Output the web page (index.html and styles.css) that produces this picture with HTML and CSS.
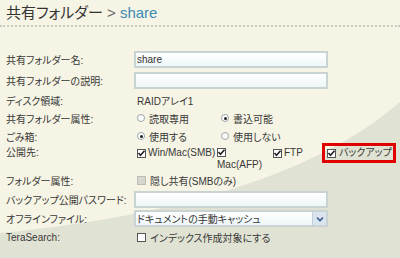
FILE: index.html
```html
<!DOCTYPE html>
<html lang="ja">
<head>
    <meta charset="UTF-8">
    <title>共有フォルダー</title>
    <link rel="stylesheet" href="styles.css">
</head>
<body>
<svg class="bg" width="400" height="258" viewBox="0 0 400 258">
    <path d="M0,233 C120,222 300,190 400,102 L400,258 L0,258 Z" fill="#e0e3d3"/>
</svg>

<div class="page">
    <h1 class="title">共有フォルダー <span class="sep">&gt;</span> <span class="name">share</span></h1>

    <div class="form">
        <div class="row field">
            <label>共有フォルダー名:</label>
            <input class="text" type="text" value="share">
        </div>
        <div class="row field">
            <label>共有フォルダーの説明:</label>
            <input class="text" type="text" value="">
        </div>
        <div class="row">
            <label>ディスク領域:</label>
            <div class="val">RAIDアレイ1</div>
        </div>
        <div class="row">
            <label>共有フォルダー属性:</label>
            <div class="opt"><span class="radio"></span>読取専用</div>
            <div class="opt"><span class="radio on"></span>書込可能</div>
        </div>
        <div class="row">
            <label>ごみ箱:</label>
            <div class="opt"><span class="radio on"></span>使用する</div>
            <div class="opt"><span class="radio"></span>使用しない</div>
        </div>
        <div class="row pub">
            <label>公開先:</label>
            <div class="pc pc1"><span class="cb on"><svg width="9" height="9" viewBox="0 0 9 9"><path d="M1.5,4 L3.5,6.3 L7.5,1.8" fill="none" stroke="#222" stroke-width="1.6"/></svg></span>Win/Mac(SMB)</div>
            <div class="pc pc2"><div class="narrow"><span class="cb on"><svg width="9" height="9" viewBox="0 0 9 9"><path d="M1.5,4 L3.5,6.3 L7.5,1.8" fill="none" stroke="#222" stroke-width="1.6"/></svg></span> Mac(AFP)</div></div>
            <div class="pc pc3"><span class="cb on"><svg width="9" height="9" viewBox="0 0 9 9"><path d="M1.5,4 L3.5,6.3 L7.5,1.8" fill="none" stroke="#222" stroke-width="1.6"/></svg></span>FTP</div>
            <div class="pc mark"><span class="cb on"><svg width="9" height="9" viewBox="0 0 9 9"><path d="M1.5,4 L3.5,6.3 L7.5,1.8" fill="none" stroke="#222" stroke-width="1.6"/></svg></span>バックアップ</div>
        </div>
        <div class="row">
            <label>フォルダー属性:</label>
            <div class="val check"><span class="cb off"></span>隠し共有(SMBのみ)</div>
        </div>
        <div class="row field pw">
            <label>バックアップ公開パスワード:</label>
            <input class="text" type="password" value="">
        </div>
        <div class="row field sel">
            <label>オフラインファイル:</label>
            <div class="select">
                <span class="sel-text">ドキュメントの手動キャッシュ</span>
                <span class="arrow"><svg width="8" height="6" viewBox="0 0 8 6"><path d="M1,1.5 L4,4.5 L7,1.5" fill="none" stroke="#3d5c8c" stroke-width="1.6"/></svg></span>
            </div>
        </div>
        <div class="row">
            <label>TeraSearch:</label>
            <div class="val check"><span class="cb"></span>インデックス作成対象にする</div>
        </div>
    </div>
</div>
</body>
</html>
```

FILE: styles.css
```css
*{
    padding: 0;
    margin: 0;
    box-sizing: border-box;
}

html, body{
    background: #f6f4e4;
}

body{
    width: 400px;
    height: 258px;
    position: relative;
    overflow: hidden;
    font-family: "Liberation Sans", "Noto Sans CJK JP", sans-serif;
    font-size: 10px;
    color: #383838;
    font-feature-settings: "palt";
}

/*背景の曲線*/
.bg{
    position: absolute;
    left: 0;
    top: 0;
}

.page{
    position: relative;
}

.title{
    height: 27px;
    padding: 1px 0 0 6px;
    font-size: 15px;
    font-weight: normal;
    line-height: 24px;
    color: #333;
    border-bottom: 2px dotted #cacac1;
}

.title .sep{
    color: #666;
}

.title .name{
    color: #3b8bb3;
}

.form{
    margin-top: 22px;
    padding-left: 6px;
}

.row{
    display: flex;
    align-items: center;
    height: 18px;
}

.row label{
    width: 128px;
    flex: none;
}

.row.field{
    height: 21px;
}

.row.pw{
    height: 20px;
}

.row.sel{
    height: 19px;
}

.val{
    padding-left: 3px;
}

.check{
    display: flex;
    align-items: center;
}

/*テキスト入力*/
.text{
    width: 194px;
    height: 17px;
    padding: 0 1px;
    border: 2px solid #cad3d3;
    background: linear-gradient(#ffffff, #eef6f8);
    font: inherit;
    color: #333;
    outline: none;
}

.select{
    width: 194px;
    height: 17px;
    display: flex;
    align-items: center;
    padding-left: 1px;
    border: 2px solid #cad3d3;
    background: linear-gradient(#ffffff, #eef6f8);
}

.select .arrow{
    margin-left: auto;
    width: 14px;
    height: 100%;
    display: flex;
    align-items: center;
    justify-content: center;
    background: #d9e4ee;
    border-left: 1px solid #c3cfd8;
}

/*ラジオボタン*/
.opt{
    display: flex;
    align-items: center;
    padding-left: 3px;
}

.opt:nth-of-type(1){
    width: 84px;
}

.radio{
    width: 8px;
    height: 8px;
    margin-right: 4px;
    border: 1px solid #9aa4a8;
    border-radius: 50%;
    background: #fff;
    display: flex;
    align-items: center;
    justify-content: center;
}

.radio.on::after{
    content: "";
    width: 3px;
    height: 3px;
    border-radius: 50%;
    background: #222;
}

/*チェックボックス*/
.cb{
    width: 9px;
    height: 9px;
    margin-right: 2px;
    border: 1px solid #555;
    background: #fff;
    display: inline-flex;
    align-items: center;
    justify-content: center;
    flex: none;
    vertical-align: -1px;
}

.cb svg{
    flex: none;
}

.cb.off{
    border-color: #bcbcb4;
    background: #d6d6ce;
}

.check .cb{
    margin-right: 4px;
}

/*公開先*/
.row.pub{
    height: 26px;
    align-items: flex-start;
    padding-top: 2px;
    line-height: 12px;
}

.pc{
    display: flex;
    align-items: center;
}

.pc1{
    width: 83px;
    padding-left: 3px;
}

.pc2{
    width: 56px;
}

.narrow{
    width: 46px;
}

.pc3{
    width: 49px;
}

/*強調枠*/
.mark{
    width: 74px;
    height: 20px;
    margin-top: -4px;
    padding: 0 0 0 2px;
    border: 3px solid #e00000;
}

.mark .cb{
    margin-right: 3px;
}
```
